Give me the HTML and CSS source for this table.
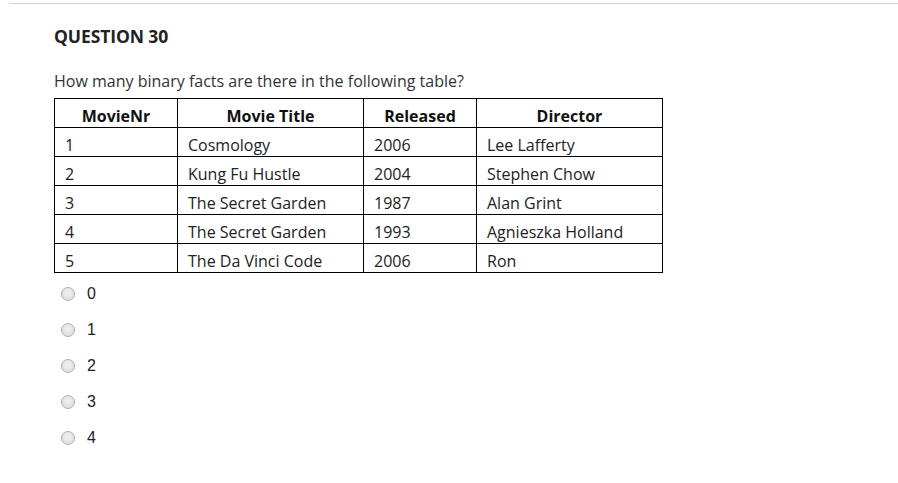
FILE: index.html
```html
<!DOCTYPE html>
<html>
<head>
<meta charset="utf-8">
<link rel="stylesheet" href="styles.css">
</head>
<body>
<div class="page">
  <hr class="rule">
  <div class="question">
    <h2 class="qtitle">QUESTION 30</h2>
    <p class="qtext">How many binary facts are there in the following table?</p>
    <table class="facts">
      <thead>
        <tr><th class="c1">MovieNr</th><th class="c2">Movie Title</th><th class="c3">Released</th><th class="c4">Director</th></tr>
      </thead>
      <tbody>
        <tr><td>1</td><td>Cosmology</td><td>2006</td><td>Lee Lafferty</td></tr>
        <tr><td>2</td><td>Kung Fu Hustle</td><td>2004</td><td>Stephen Chow</td></tr>
        <tr><td>3</td><td>The Secret Garden</td><td>1987</td><td>Alan Grint</td></tr>
        <tr><td>4</td><td>The Secret Garden</td><td>1993</td><td>Agnieszka Holland</td></tr>
        <tr><td>5</td><td>The Da Vinci Code</td><td>2006</td><td>Ron</td></tr>
      </tbody>
    </table>
    <ul class="choices">
      <li class="choice"><span class="radio"></span><span class="label">0</span></li>
      <li class="choice"><span class="radio"></span><span class="label">1</span></li>
      <li class="choice"><span class="radio"></span><span class="label">2</span></li>
      <li class="choice"><span class="radio"></span><span class="label">3</span></li>
      <li class="choice"><span class="radio"></span><span class="label">4</span></li>
    </ul>
  </div>
</div>
</body>
</html>
```
FILE: styles.css
```css
html, body {
  margin: 0;
  padding: 0;
  background: #fff;
}
body {
  font-family: "Open Sans", sans-serif;
  color: #222;
}
.page {
  padding: 3px 0 0 9px;
}
.rule {
  margin: 0;
  border: 0;
  border-top: 1px solid #d2d2d2;
  height: 0;
}
.question {
  padding-left: 45px;
}
.qtitle {
  margin: 21px 0 0 0;
  font-size: 17.5px;
  font-weight: 700;
  line-height: 22px;
  color: #222;
  letter-spacing: -0.1px;
}
.qtext {
  margin: 23px 0 0 0;
  font-size: 16px;
  line-height: 22px;
  color: #333;
}
.facts {
  margin-top: 6px;
  border-collapse: collapse;
  border: 1px solid #000;
  font-size: 16px;
}
.facts th, .facts td {
  border: 1px solid #000;
  height: 29px;
  padding: 5px 0 0 10px;
  box-sizing: border-box;
  line-height: 20px;
  text-align: left;
  color: #222;
}
.facts th {
  font-weight: 700;
  text-align: center;
  padding: 6px 0 0 0;
  color: #111;
}
.facts .c1 { width: 123px; }
.facts .c2 { width: 186px; }
.facts .c3 { width: 113px; }
.facts .c4 { width: 186px; }
.choices {
  list-style: none;
  margin: 3px 0 0 0;
  padding: 0 0 0 7px;
}
.choice {
  display: flex;
  align-items: center;
  height: 36px;
}
.radio {
  width: 12px;
  height: 12px;
  border-radius: 50%;
  border: 1px solid #b0b0b0;
  background: radial-gradient(circle at 50% 40%, #f2f2f2 0%, #d8d8d8 100%);
  flex: none;
}
.label {
  margin-left: 12px;
  font-family: "Liberation Sans", Arial, sans-serif;
  font-size: 16px;
  color: #222;
}
```
